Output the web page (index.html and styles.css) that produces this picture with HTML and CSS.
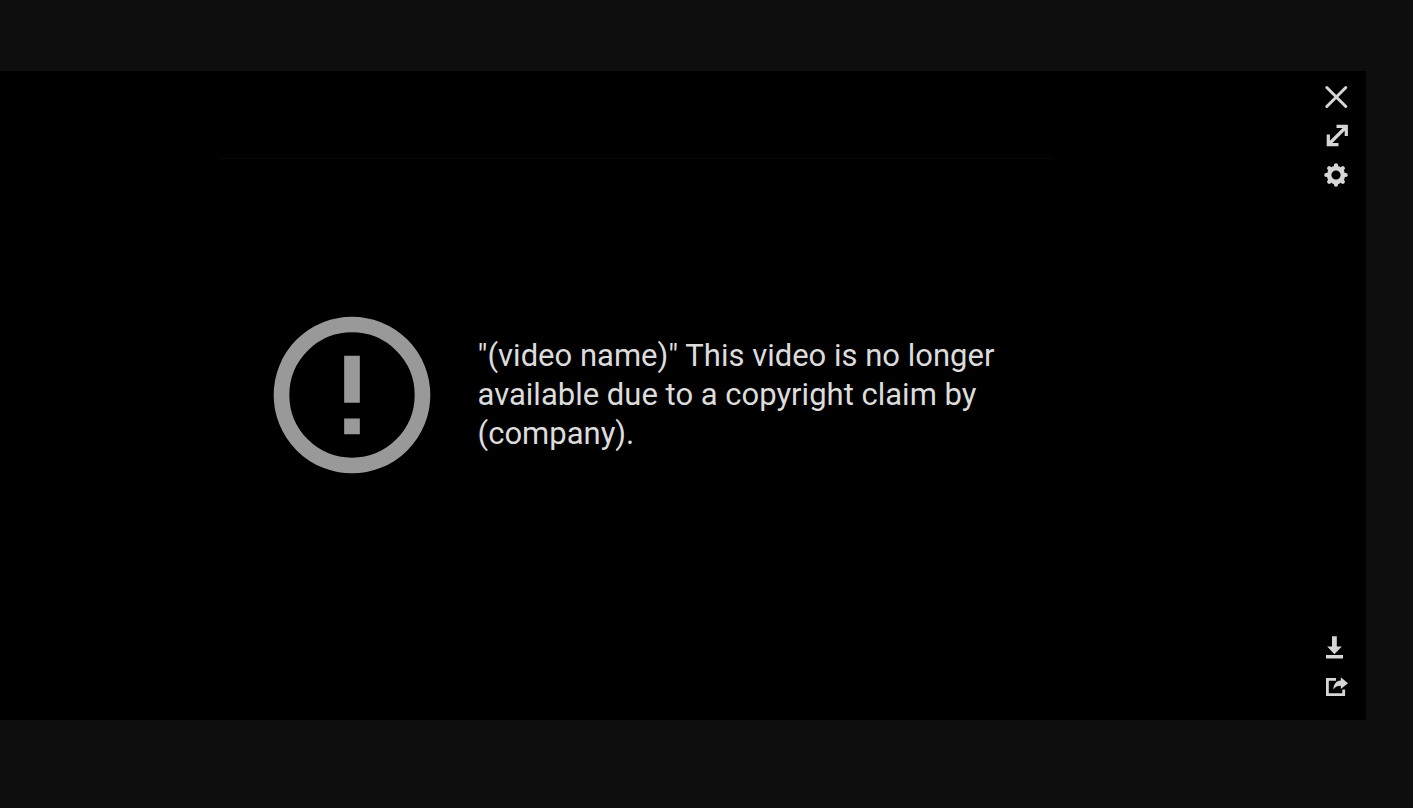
FILE: index.html
```html
<!DOCTYPE html>
<html lang="en">
<head>
<meta charset="utf-8">
<meta name="viewport" content="width=device-width, initial-scale=1">
<title>Video unavailable</title>
<link rel="stylesheet" href="styles.css">
</head>
<body>
<main class="player">
  <div class="stage">
    <section class="notice">
      <svg class="notice-icon" viewBox="0 0 24 24" aria-hidden="true">
        <circle cx="12" cy="12" r="9" fill="none" stroke="currentColor" stroke-width="2"/>
        <path d="M11 7h2v6h-2zM11 15h2v2h-2z" fill="currentColor"/>
      </svg>
      <p class="notice-text">"(video name)" This video is no longer available due to a copyright claim by (company).</p>
    </section>
  </div>
  <nav class="tools" aria-label="Player controls">
    <div class="tool-group">
      <button class="tool" type="button" aria-label="Close">
        <svg viewBox="0 0 24 24"><path d="M2.800 2.500L21.800 21.500M21.800 2.500L2.800 21.500" fill="none" stroke="currentColor" stroke-width="3" stroke-linecap="round"/></svg>
      </button>
      <button class="tool" type="button" aria-label="Expand">
        <svg viewBox="0 0 24 24"><path d="M12.500 2.300H22.300V12M4.300 10.500V20.600H14.500M5.500 19.500L21.500 3.500" fill="none" stroke="currentColor" stroke-width="3.200"/></svg>
      </button>
      <button class="tool" type="button" aria-label="Settings">
        <svg viewBox="0 0 24 24">
          <circle cx="12" cy="12" r="6.900" fill="none" stroke="currentColor" stroke-width="4.600"/>
          <path d="M12 2.300v2M12 19.700v2M2.300 12h2M19.700 12h2M5.200 5.200l1.500 1.500M17.300 17.300l1.500 1.500M5.200 18.800l1.500-1.500M17.300 6.700l1.500-1.500" fill="none" stroke="currentColor" stroke-width="4.200" stroke-linecap="round"/>
        </svg>
      </button>
    </div>
    <div class="tool-group">
      <button class="tool" type="button" aria-label="Download">
        <svg viewBox="0 0 24 24"><path d="M8 .3h4.800v10.300h5L10.400 18.300 3.200 10.600H8zM2 19.100h17v3.500H2z" fill="currentColor"/></svg>
      </button>
      <button class="tool" type="button" aria-label="Share">
        <svg viewBox="0 0 24 24">
          <path d="M12 4.300H3.400V19.700H19.700V14.500" fill="none" stroke="currentColor" stroke-width="2.800"/>
          <path d="M16.800 2.300L24 8.200 16.800 14V10.800C13.500 10.800 11.300 11.600 9.300 14.500 9.600 9 12 5.800 16.800 5.400z" fill="currentColor"/>
        </svg>
      </button>
    </div>
  </nav>
</main>
</body>
</html>
```
FILE: styles.css
```css
* {
  box-sizing: border-box;
}

body {
  display: flex;
  min-height: 100vh;
  margin: 0;
  padding: 71px 47px 88px 0;
  background: #0e0e0e;
  color: #dcdcdc;
  font-family: Roboto, "Liberation Sans", sans-serif;
}

.player {
  display: flex;
  flex: 1;
  background: #000;
}

.stage {
  display: flex;
  flex: 1;
  padding: 87px 0 90px 16%;
}

.notice {
  display: flex;
  align-items: center;
  gap: 32px;
  width: 100%;
  max-width: 832px;
  padding: 0 39px;
  border-top: 1px solid #080808;
}

.notice-icon {
  flex: none;
  width: 188px;
  height: 188px;
  color: #999;
}

.notice-text {
  max-width: 540px;
  margin: 0;
  font-size: 31px;
  line-height: 39px;
}

.tools {
  display: flex;
  flex-direction: column;
  justify-content: space-between;
  width: 60px;
  padding: 7px 0 14px;
}

.tool-group {
  display: flex;
  flex-direction: column;
  align-items: center;
  gap: 1px;
}

.tool {
  display: flex;
  align-items: center;
  justify-content: center;
  width: 38px;
  height: 38px;
  padding: 0;
  border: 0;
  background: none;
  color: #d6d6d6;
  cursor: pointer;
}

.tool svg {
  width: 24px;
  height: 24px;
}
```
